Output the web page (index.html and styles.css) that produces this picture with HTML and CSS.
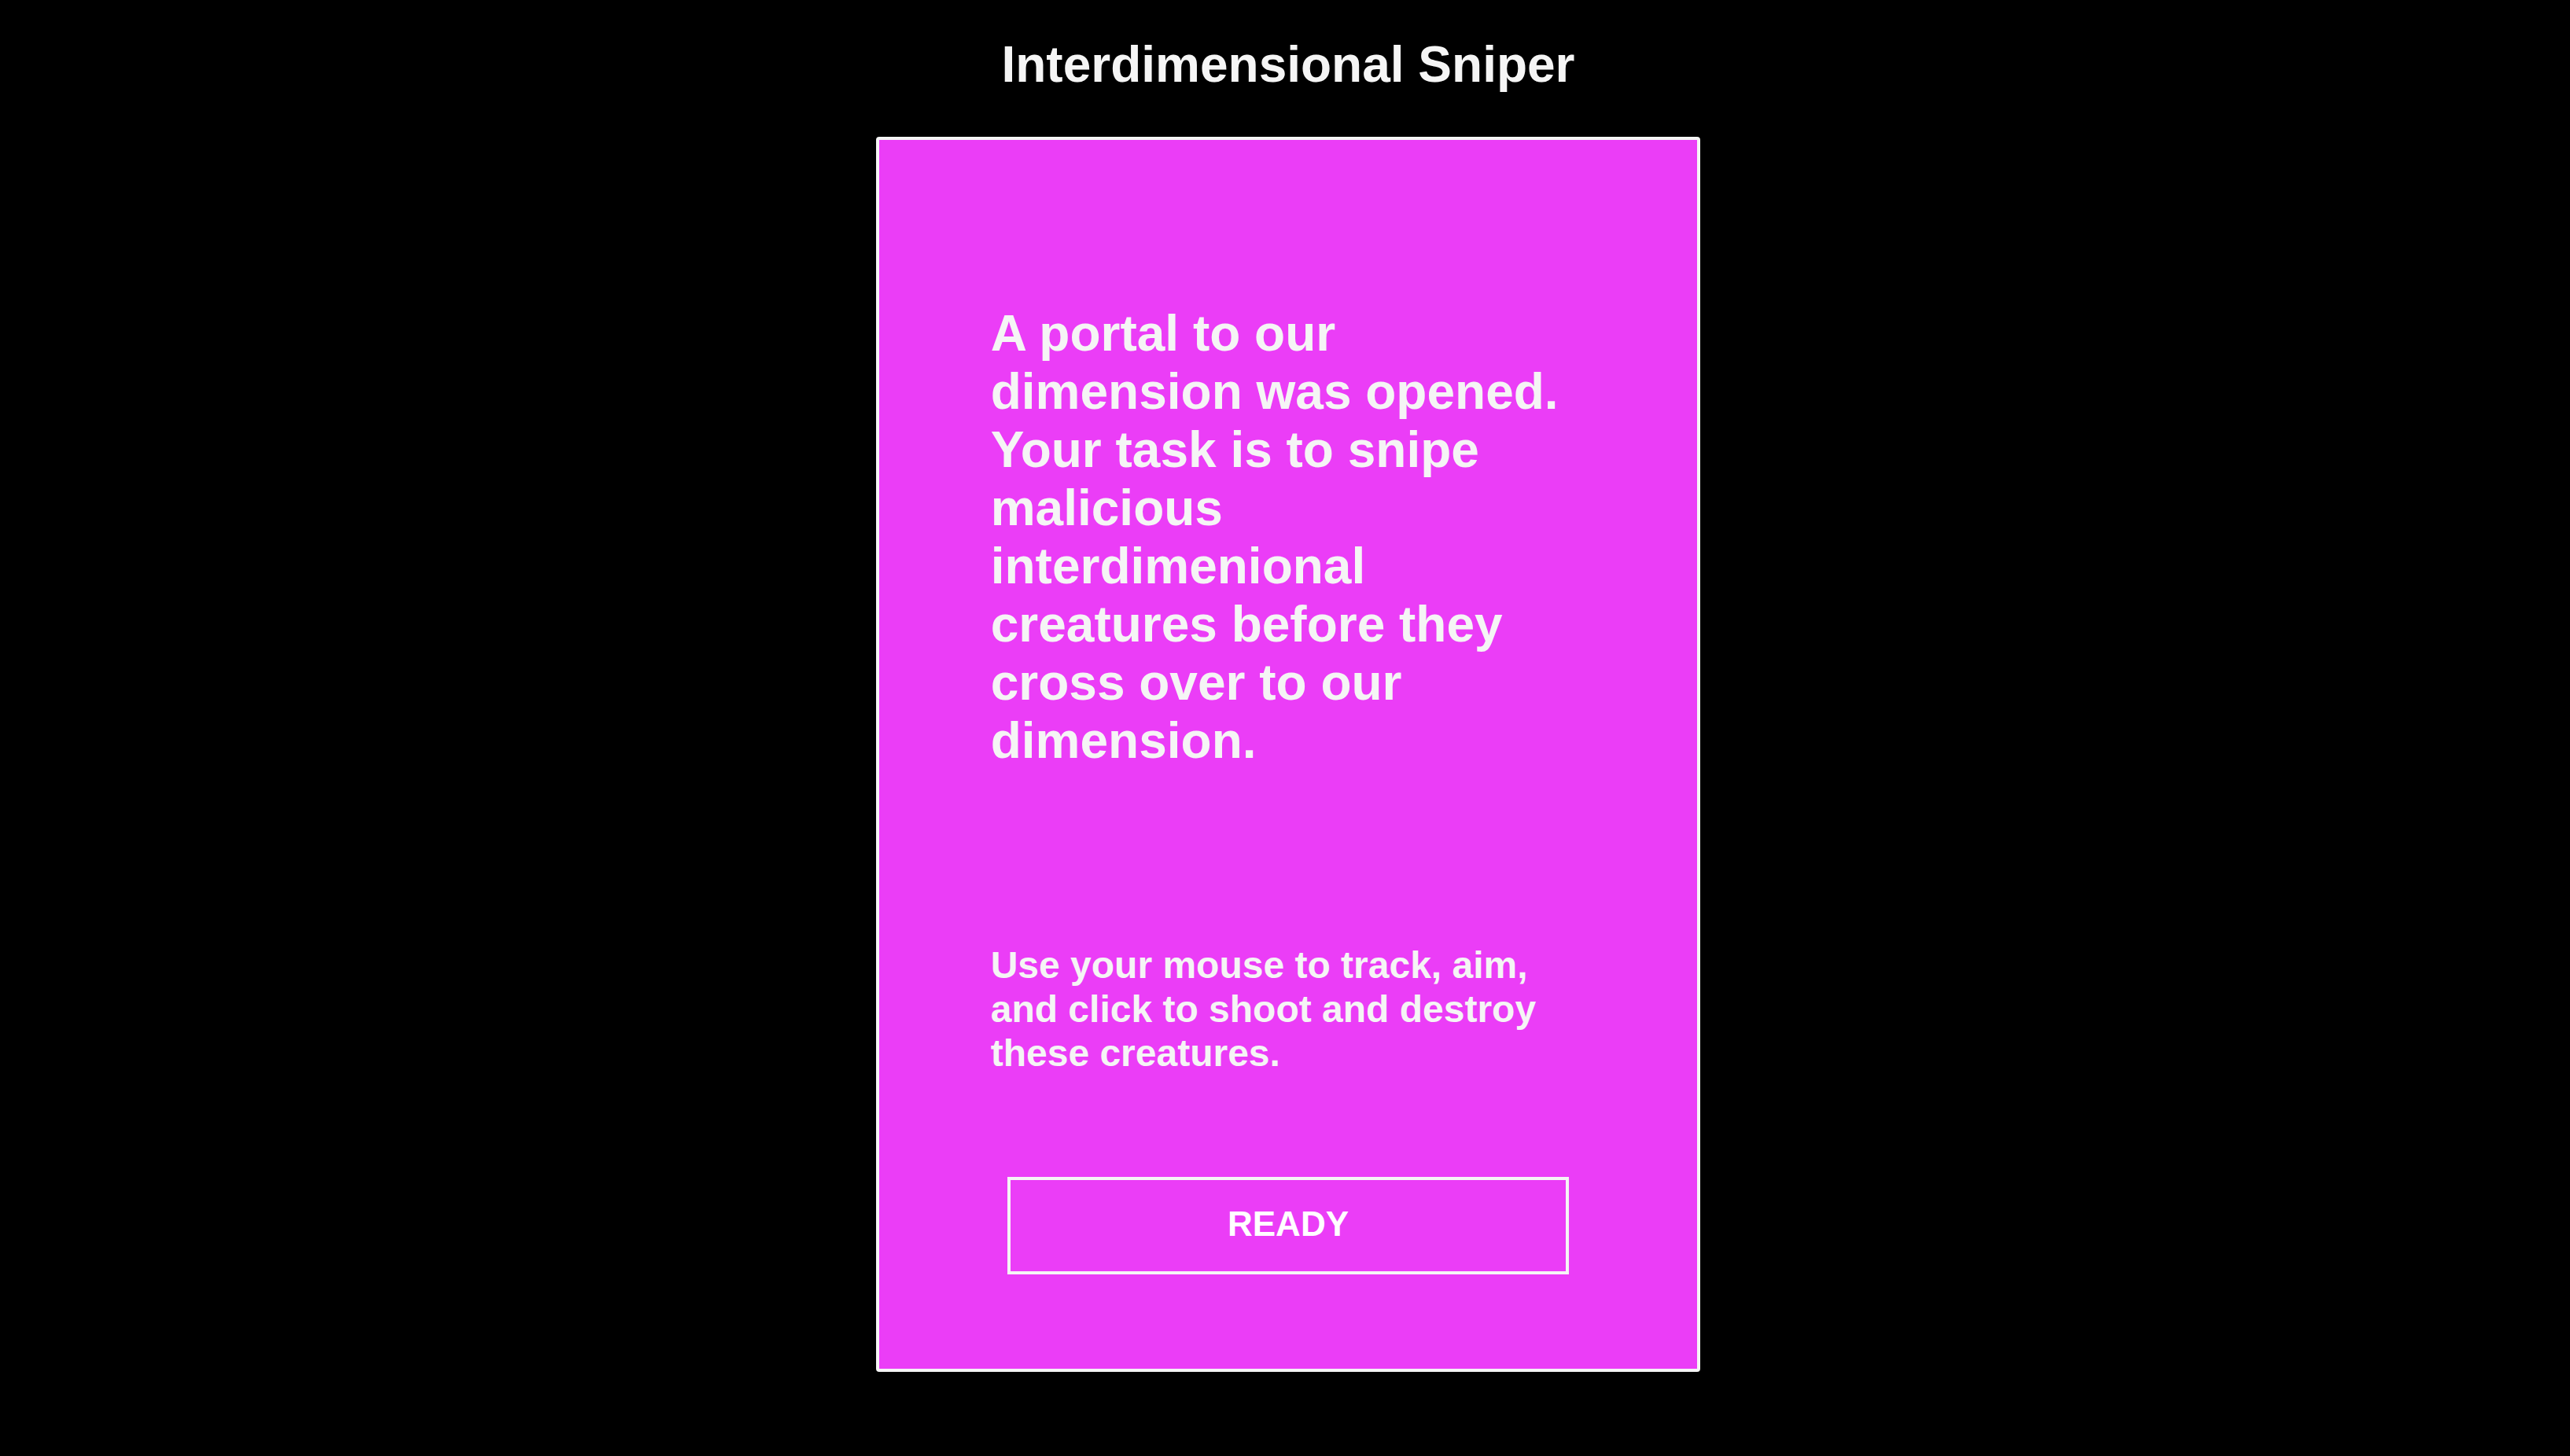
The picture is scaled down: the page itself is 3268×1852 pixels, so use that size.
FILE: index.html
```html
<!DOCTYPE html>
<html lang="en">
<head>
<meta charset="utf-8">
<title>Interdimensional Sniper</title>
<link rel="stylesheet" href="styles.css">
</head>
<body>
<header class="header"><h1 class="title">Interdimensional Sniper</h1></header>
<main class="panel">
<h2 class="story">A portal to our dimension was opened. Your task is to snipe malicious interdimenional creatures before they cross over to our dimension.</h2>
<p class="instructions">Use your mouse to track, aim, and click to shoot and destroy these creatures.</p>
<button class="ready" type="button">READY</button>
</main>
</body>
</html>
```

FILE: styles.css
```css
* {
  box-sizing: border-box;
}

body {
  margin: 0;
  padding: 0 4px 0 12px;
  background: #000;
  color: #f5f5f5;
  font-family: "Liberation Sans", Arial, sans-serif;
  font-weight: bold;
}

.header {
  padding: 45px 0 55px;
  text-align: center;
}

.title,
.story {
  margin: 0;
  font-size: 64px;
  line-height: 74px;
}

.panel {
  width: calc(32% + 8px);
  min-width: 700px;
  margin: 0 auto;
  padding: 209px 142px 120px;
  border: 4px solid #f5f5f5;
  border-radius: 4px;
  background: #eb3df7;
}

.instructions {
  margin: 221px 0 0;
  font-size: 48px;
  line-height: 56px;
}

.ready {
  display: block;
  width: calc(100% - 42px);
  height: 124px;
  margin: 129px auto 0;
  padding: 0 0 4px;
  border: 4px solid #f5f5f5;
  background: transparent;
  color: #fff;
  font: bold 44px "Liberation Sans", Arial, sans-serif;
}
```
